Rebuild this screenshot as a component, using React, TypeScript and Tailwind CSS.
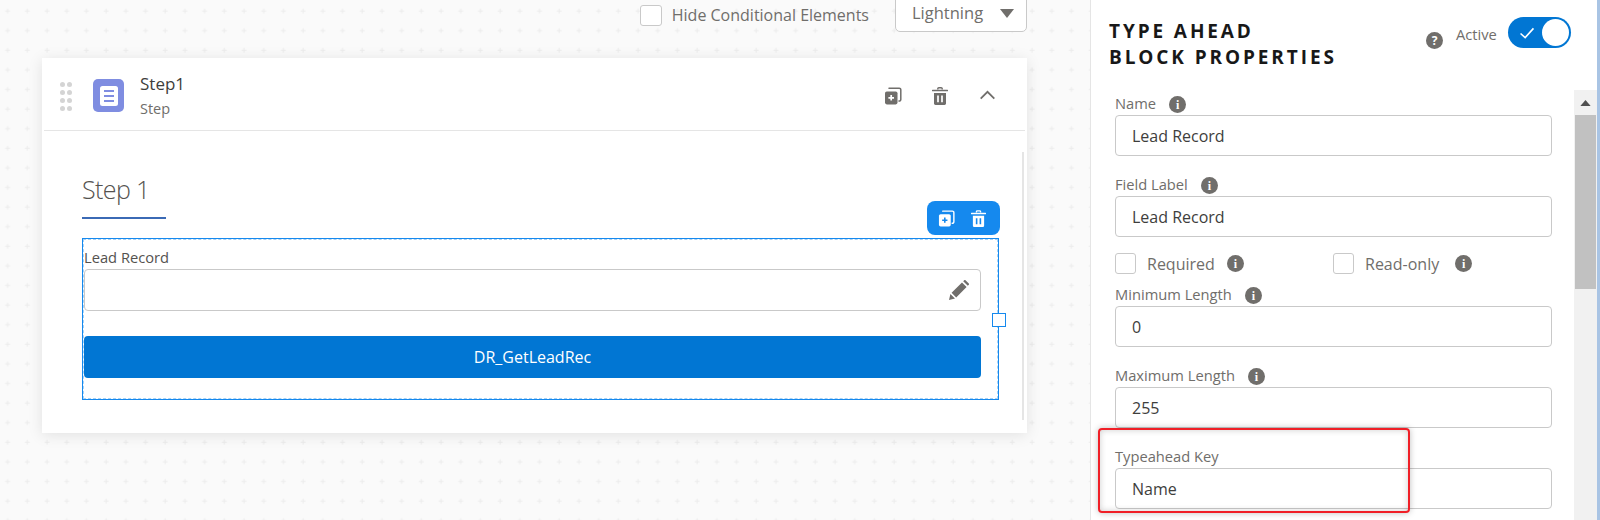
import React from 'react'

const font = { fontFamily: '"Open Sans", "Noto Sans", sans-serif' }

function CopyIcon({ className, cut }: { className?: string; cut: string }) {
  return (
    <svg viewBox="0 0 18 18" className={className} fill="none">
      <path d="M5 1.2h10a1.6 1.6 0 0 1 1.8 1.8v9.5a1.6 1.6 0 0 1-1.8 1.6" stroke="currentColor" strokeWidth="1.5" strokeLinecap="round" />
      <rect x="1" y="4.4" width="12.5" height="13" rx="1.8" fill="currentColor" />
      <path d="M7.2 8v5.6M4.4 10.8H10" stroke={cut} strokeWidth="1.7" />
    </svg>
  )
}

function TrashIcon({ className, cut }: { className?: string; cut: string }) {
  return (
    <svg viewBox="0 0 16 18" className={className} fill="none">
      <path d="M5.8 2.6V1.8A1 1 0 0 1 6.8 .8h2.4a1 1 0 0 1 1 1v.8" stroke="currentColor" strokeWidth="1.4" />
      <path d="M.6 3.6h14.8" stroke="currentColor" strokeWidth="1.5" strokeLinecap="round" />
      <path d="M2 6h12v10.4A1.5 1.5 0 0 1 12.5 18h-9A1.5 1.5 0 0 1 2 16.4z" fill="currentColor" />
      <path d="M6 8.6v6.6M10 8.6v6.6" stroke={cut} strokeWidth="1.7" />
    </svg>
  )
}

function InfoDot({ className = '' }: { className?: string }) {
  return (
    <span className={`inline-flex h-[17px] w-[17px] shrink-0 items-center justify-center rounded-full bg-[#706e6b] text-[12px] leading-none font-bold text-white ${className}`} style={{ fontFamily: '"Liberation Serif", serif' }}>
      i
    </span>
  )
}

function Field({ label, value, info = true }: { label: string; value: string; info?: boolean }) {
  return (
    <div>
      <div className="flex h-[20px] items-center text-[14.7px] text-[#706e6b]">
        <span>{label}</span>
        {info && <InfoDot className="mt-[3px] ml-[13px]" />}
      </div>
      <div className="mt-[2px] flex h-[41px] items-center rounded-[4px] border border-[#c9c9c9] bg-white pl-[16px] text-[16px] text-[#3e3e3c]">{value}</div>
    </div>
  )
}

function CheckItem({ label, className = '', dotGap = 'ml-[12px]' }: { label: string; className?: string; dotGap?: string }) {
  return (
    <div className={`flex items-center ${className}`}>
      <span className="h-[21px] w-[21px] rounded-[3px] border border-[#c9c9c9] bg-white" />
      <span className="ml-[11px] text-[16px] text-[#706e6b]">{label}</span>
      <InfoDot className={dotGap} />
    </div>
  )
}

export default function App() {
  return (
    <div className="flex h-[520px] w-[1600px] overflow-hidden bg-white" style={font}>
      {/* canvas */}
      <div className="relative h-full w-[1091px] shrink-0 border-r border-[#e5e5e5] bg-[#fafafa] pl-[42px]">
        <svg className="absolute inset-0 h-full w-full" aria-hidden="true">
          <defs>
            <pattern id="plus" x="-2.4" y="1" width="19.7" height="19.6" patternUnits="userSpaceOnUse">
              <path d="M7.5 10h5M10 7.5v5" stroke="#ececec" strokeWidth="1" />
            </pattern>
          </defs>
          <rect width="100%" height="100%" fill="url(#plus)" />
        </svg>

        <div className="relative w-[985px]">
          {/* top bar */}
          <div className="flex h-[58px] items-start justify-end">
            <div className="mt-[5px] flex items-center">
              <span className="h-[21px] w-[22px] rounded-[3px] border border-[#c9c9c9] bg-white" />
              <span className="ml-[10px] text-[16px] leading-[21px] text-[#706e6b]">Hide Conditional Elements</span>
            </div>
            <div className="mt-[-6px] ml-[26px] flex h-[38px] w-[132px] items-center rounded-[5px] border border-[#c9c9c9] bg-white pl-[16px] text-[16.5px] text-[#706e6b]">
              <span>Lightning</span>
              <svg viewBox="0 0 14 9" className="ml-[17px] h-[9px] w-[14px]"><path d="M0 0h14L7 9z" fill="#706e6b" /></svg>
            </div>
          </div>

          {/* step card */}
          <div className="relative h-[375px] bg-white shadow-[0_2px_14px_rgba(0,0,0,0.1)]">
            <div className="mx-[2px] flex h-[73px] items-start border-b border-[#e5e5e5]">
              <div className="mt-[24px] ml-[16px] grid grid-cols-2 gap-x-[2px] gap-y-[3px]">
                {[0, 1, 2, 3, 4, 5, 6, 7].map((d) => (
                  <span key={d} className="h-[5px] w-[5px] rounded-full bg-[#d4d4d4]" />
                ))}
              </div>
              <div className="mt-[21px] ml-[21px] flex h-[33px] w-[31px] items-center justify-center rounded-[5px] bg-[#7f8de1]">
                <svg viewBox="0 0 18 20" className="h-[20px] w-[18px]">
                  <rect width="18" height="20" rx="2.5" fill="#fff" />
                  <path d="M4 5h10M4 10h10M4 15h10" stroke="#7f8de1" strokeWidth="2" />
                </svg>
              </div>
              <div className="mt-[14px] ml-[16px]">
                <div className="text-[17px] leading-[24px] text-[#3e3e3c]">Step1</div>
                <div className="mt-[3px] text-[14.5px] leading-[20px] text-[#706e6b]">Step</div>
              </div>
              <div className="mt-[29px] ml-auto flex items-start text-[#706e6b]">
                <CopyIcon className="h-[18px] w-[18px]" cut="#fff" />
                <TrashIcon className="ml-[30px] h-[18px] w-[16px]" cut="#fff" />
                <svg viewBox="0 0 18 11" className="mt-[3px] mr-[29px] ml-[31px] h-[10px] w-[17px]" fill="none"><path d="M1.5 9.5 9 2l7.5 7.5" stroke="#706e6b" strokeWidth="2" /></svg>
              </div>
            </div>

            <div className="relative pt-[40px] pl-[40px]">
              <div className="w-[84px] border-b-2 border-[#3b6ab5] pb-[10px] text-[25px] leading-[36px] font-light tracking-[-0.6px] text-[#54524f]">Step 1</div>

              {/* selected element */}
              <div className="relative mt-[19px] h-[162px] w-[917px] border border-[#1589ee]">
                <div className="h-full border border-dashed border-[#a8d2f5]">
                  <div className="pt-[7px] text-[14.7px] leading-[20px] text-[#54524f]">Lead Record</div>
                  <div className="mt-[2px] flex h-[42px] w-[897px] items-center justify-end rounded-[4px] border border-[#c9c9c9] bg-white pr-[11px]">
                    <svg viewBox="0 0 20 20" className="h-[20px] w-[20px]"><path d="M0 20l1.4-6L6 18.600zM2.600 12.800 13 2.400 17.600 7 7.200 17.400zM14.200 1.200l1-1a1 1 0 0 1 1.300 0l3.300 3.300a1 1 0 0 1 0 1.300l-1 1z" fill="#706e6b" /></svg>
                  </div>
                  <div className="mt-[25px] flex h-[42px] w-[897px] items-center justify-center rounded-[4px] bg-[#0176d3] text-[16px] text-white">DR_GetLeadRec</div>
                </div>
                <div className="absolute top-[-38px] right-[-2px] flex h-[34px] w-[73px] items-center gap-[16px] rounded-[8px] bg-[#1589ee] pl-[11px] text-white">
                  <CopyIcon className="h-[17px] w-[17px]" cut="#1589ee" />
                  <TrashIcon className="h-[17px] w-[15px]" cut="#1589ee" />
                </div>
                <span className="absolute top-[74px] right-[-8px] h-[14px] w-[14px] border border-[#1589ee] bg-white" />
              </div>
            </div>

            <span className="absolute top-[94px] right-[3px] h-[268px] w-[2px] bg-[#e5e5e5]" />
          </div>
        </div>
      </div>

      {/* properties panel */}
      <div className="relative flex-1 border-r-[3px] border-[#a9c4e4]">
        <div className="flex h-[90px] items-start pt-[18px] pl-[18px]">
          <div className="w-[300px] text-[19px] leading-[26px] font-bold tracking-[2.9px] text-[#181818]">
            TYPE AHEAD<br />BLOCK PROPERTIES
          </div>
          <span className="mt-[14px] ml-[17px] flex h-[17px] w-[17px] items-center justify-center rounded-full bg-[#706e6b] text-[12px] leading-none font-bold text-white">?</span>
          <span className="mt-[6px] ml-[13px] text-[14.7px] leading-[20px] text-[#706e6b]">Active</span>
          <div className="mt-[-1px] ml-[11px] flex h-[31px] w-[63px] items-center rounded-full bg-[#0176d3] pr-[2px]">
            <svg viewBox="0 0 16 13" className="ml-[11px] h-[12px] w-[16px]" fill="none"><path d="M1 7l5 4.500L15 1.500" stroke="#fff" strokeWidth="1.700" /></svg>
            <span className="ml-auto h-[27px] w-[27px] rounded-full bg-white" />
          </div>
        </div>

        <div className="flex">
          <div className="w-[483px] shrink-0 pr-[22px] pl-[24px]">
            <div className="mt-[3px]"><Field label="Name" value="Lead Record" /></div>
            <div className="mt-[18px]"><Field label="Field Label" value="Lead Record" /></div>
            <div className="mt-[16px] flex h-[21px]">
              <CheckItem label="Required" className="w-[218px]" />
              <CheckItem label="Read-only" dotGap="ml-[16px]" />
            </div>
            <div className="mt-[10px]"><Field label="Minimum Length" value="0" /></div>
            <div className="mt-[18px]"><Field label="Maximum Length" value="255" /></div>
            <div className="mt-[18px]"><Field label="Typeahead Key" value="Name" info={false} /></div>
          </div>
          <div className="h-[430px] w-[23px] shrink-0 bg-[#f1f1f1]">
            <svg viewBox="0 0 12 7" className="mx-auto mt-[10px] h-[6px] w-[11px]"><path d="M0 7h12L6 0z" fill="#505050" /></svg>
            <div className="mx-auto mt-[9px] h-[174px] w-[21px] bg-[#c1c1c1]" />
          </div>
        </div>

        <div className="absolute top-[428px] left-[7px] h-[85px] w-[312px] rounded-[4px] border-2 border-[#f01f27] shadow-[0_0_6px_rgba(0,0,0,0.25),inset_0_0_6px_rgba(0,0,0,0.2)]" />
      </div>
    </div>
  )
}
